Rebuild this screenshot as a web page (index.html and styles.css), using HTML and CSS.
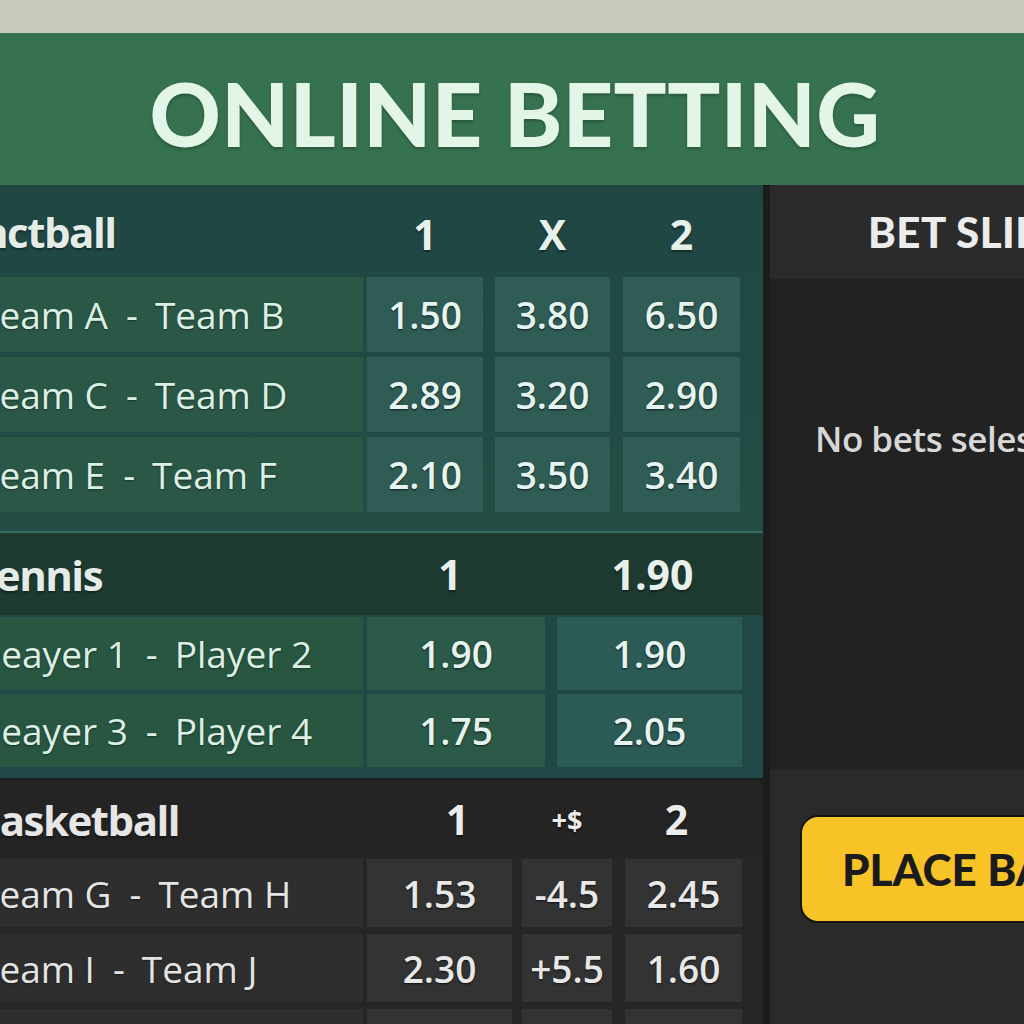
FILE: index.html
```html
<!DOCTYPE html>
<html lang="en">
<head>
<meta charset="utf-8">
<title>Online Betting</title>
<link rel="stylesheet" href="styles.css">
</head>
<body>
<div class="page">
  <div class="topstrip"></div>
  <header class="banner"><h1>ONLINE BETTING</h1></header>
  <div class="main">
    <div class="markets">
      <section class="sport football">
        <div class="sport-head">
          <h2>nctball</h2>
          <div class="odds labels"><span class="c1">1</span><span class="c2">X</span><span class="c3">2</span></div>
        </div>
        <div class="row">
          <div class="name">Team A<span class="dash">-</span>Team B</div>
          <div class="odds"><span class="cell c1">1.50</span><span class="cell c2">3.80</span><span class="cell c3">6.50</span></div>
        </div>
        <div class="row">
          <div class="name">Team C<span class="dash">-</span>Team D</div>
          <div class="odds"><span class="cell c1">2.89</span><span class="cell c2">3.20</span><span class="cell c3">2.90</span></div>
        </div>
        <div class="row">
          <div class="name">Team E<span class="dash">-</span>Team F</div>
          <div class="odds"><span class="cell c1">2.10</span><span class="cell c2">3.50</span><span class="cell c3">3.40</span></div>
        </div>
      </section>

      <section class="sport tennis">
        <div class="sport-head">
          <h2>Tennis</h2>
          <div class="odds labels"><span class="c1">1</span><span class="c2">1.90</span></div>
        </div>
        <div class="row">
          <div class="name">Peayer 1<span class="dash">-</span>Player 2</div>
          <div class="odds"><span class="cell c1">1.90</span><span class="cell c2">1.90</span></div>
        </div>
        <div class="row">
          <div class="name">Peayer 3<span class="dash">-</span>Player 4</div>
          <div class="odds"><span class="cell c1">1.75</span><span class="cell c2">2.05</span></div>
        </div>
      </section>

      <section class="sport basketball">
        <div class="sport-head">
          <h2>Basketball</h2>
          <div class="odds labels"><span class="c1">1</span><span class="c2 small">+$</span><span class="c3">2</span></div>
        </div>
        <div class="row">
          <div class="name">Team G<span class="dash">-</span>Team H</div>
          <div class="odds"><span class="cell c1">1.53</span><span class="cell c2">-4.5</span><span class="cell c3">2.45</span></div>
        </div>
        <div class="row">
          <div class="name">Team I<span class="dash">-</span>Team J</div>
          <div class="odds"><span class="cell c1">2.30</span><span class="cell c2">+5.5</span><span class="cell c3">1.60</span></div>
        </div>
        <div class="row">
          <div class="name"></div>
          <div class="odds"><span class="cell c1"></span><span class="cell c2"></span><span class="cell c3"></span></div>
        </div>
      </section>
    </div>
    <div class="divider"></div>
    <aside class="slip">
      <div class="slip-head"><h3>BET SLIP</h3></div>
      <div class="slip-body"><p>No bets seles</p></div>
      <div class="slip-foot"><button class="place">PLACE BAT</button></div>
    </aside>
  </div>
</div>
</body>
</html>
```

FILE: styles.css
```css
* { box-sizing: border-box; }
html, body { margin: 0; padding: 0; }
body {
  background: #222222;
  font-family: "Open Sans", Lato, "Liberation Sans", sans-serif;
}
.page {
  width: 1024px;
  height: 1024px;
  overflow: hidden;
  display: flex;
  flex-direction: column;
}
.topstrip {
  height: 33px;
  flex: none;
  background: #c8c9bd;
}
.banner {
  height: 152px;
  flex: none;
  background: #36724f;
  display: flex;
  align-items: center;
  justify-content: center;
  padding-top: 8px;
  padding-left: 6px;
}
.banner h1 {
  margin: 0;
  font-family: Lato, sans-serif;
  font-weight: 900;
  font-size: 88px;
  letter-spacing: 0.4px;
  color: #e2f5e7;
  text-shadow: 0 2px 3px rgba(0, 0, 0, 0.25);
}
.main {
  flex: 1;
  display: flex;
  min-height: 0;
}
.markets {
  flex: none;
  width: 793px;
  margin-left: -30px;
  display: flex;
  flex-direction: column;
}
.sport {
  flex: none;
}
.sport-head,
.row {
  display: flex;
  padding-right: 23px;
}
.sport-head {
  align-items: center;
}
.sport-head h2 {
  margin: 0;
  flex: 0 0 393px;
  padding-left: 3px;
  font-size: 42px;
  font-weight: 700;
  letter-spacing: -1.5px;
  color: #e4ece8;
  text-shadow: 0 2px 2px rgba(0, 0, 0, 0.35);
}
.football .sport-head h2 { padding-left: 11px; }
.name {
  flex: 0 0 393px;
  padding-left: 9px;
  display: flex;
  align-items: center;
  font-size: 37px;
  font-weight: 400;
  color: #dcefe5;
  white-space: nowrap;
  text-shadow: 0 1px 2px rgba(0, 0, 0, 0.4);
}
.dash { margin: 0 17px 0 18px; }
.odds {
  display: flex;
  margin-left: 4px;
  gap: 12px;
}
.odds span {
  display: flex;
  align-items: center;
  justify-content: center;
}
.cell {
  font-size: 37px;
  font-weight: 600;
  color: #e6f3ee;
  text-shadow: 0 1px 2px rgba(0, 0, 0, 0.7);
}
.labels span {
  font-size: 41px;
  font-weight: 700;
  color: #e8f0ec;
  text-shadow: 0 2px 2px rgba(0, 0, 0, 0.4);
}
.labels span.small { font-size: 27px; }

/* Football */
.football {
  height: 346px;
  background: linear-gradient(180deg, #1f4643 0%, #234d45 100%);
  padding-bottom: 19px;
}
.football .sport-head { height: 92px; }
.football .labels { padding-top: 6px; }
.football .row { height: 75px; margin-bottom: 5px; }
.football .row:last-child { margin-bottom: 0; }
.football .name { background: #2a5746; }
.football .cell { background: #2f5d55; }
.football .c1 { width: 116px; }
.football .c2 { width: 115px; }
.football .c3 { width: 117px; margin-left: 1px; }

/* Tennis */
.tennis {
  height: 247px;
  background: #1f4847;
  border-top: 2px solid #3a6b62;
}
.tennis .sport-head { height: 82px; background: #1d3b31; margin-bottom: 2px; }
.tennis .row { height: 73px; margin-bottom: 4px; }
.tennis .name { background: #285640; }
.tennis .cell.c1 { background: #2b5a48; }
.tennis .cell.c2 { background: #2c5a55; }
.tennis .c1 { width: 178px; }
.tennis .c2 { width: 185px; }
.tennis .labels .c1 { padding-right: 12px; }
.tennis .labels .c2 { padding-left: 6px; }

/* Basketball */
.basketball {
  flex: 1;
  background: #262626;
  border-top: 3px solid #1e1e1e;
}
.basketball .sport-head { height: 76px; background: #242424; margin-bottom: 2px; }
.basketball .row { height: 68px; margin-bottom: 7px; }
.basketball .name { background: #2e2e2e; color: #e4e4e4; }
.basketball .cell { background: #333333; color: #e8e8e8; }
.basketball h2 { color: #e6e6e6; }
.basketball .labels span { color: #ececec; }
.basketball .odds { gap: 0; }
.basketball .c1 { width: 145px; }
.basketball .c2 { width: 90px; margin-left: 10px; }
.basketball .c3 { width: 117px; margin-left: 13px; }
.basketball .labels .c1 { padding-left: 36px; }
.basketball .labels .c3 { padding-right: 14px; }

/* Divider and slip */
.divider {
  flex: 0 0 7px;
  background: #1b1c1c;
}
.slip {
  flex: 1;
  display: flex;
  flex-direction: column;
  min-width: 0;
}
.slip-head {
  height: 94px;
  flex: none;
  background: #2b2b2b;
  display: flex;
  align-items: center;
  padding-left: 98px;
  border-bottom: 1px solid #262626;
}
.slip-head h3 {
  margin: 0;
  font-family: Lato, sans-serif;
  font-size: 42px;
  font-weight: 900;
  color: #ececec;
  white-space: nowrap;
  letter-spacing: 0.5px;
}
.slip-body {
  height: 491px;
  flex: none;
  background: #222222;
  padding-left: 45px;
  padding-top: 136px;
}
.slip-body p {
  margin: 0;
  font-size: 35px;
  font-weight: 600;
  letter-spacing: -0.5px;
  color: #d8d8d8;
  white-space: nowrap;
}
.slip-foot {
  flex: 1;
  background: #2a2a2a;
  padding-top: 45px;
  padding-left: 30px;
}
.place {
  width: 320px;
  height: 108px;
  border: 2px solid #141414;
  border-radius: 18px;
  background: #f7c326;
  text-align: left;
  padding: 0 0 0 40px;
  font-family: Lato, sans-serif;
  font-size: 44px;
  font-weight: 900;
  color: #1b1b1b;
  white-space: nowrap;
  overflow: hidden;
}
```
